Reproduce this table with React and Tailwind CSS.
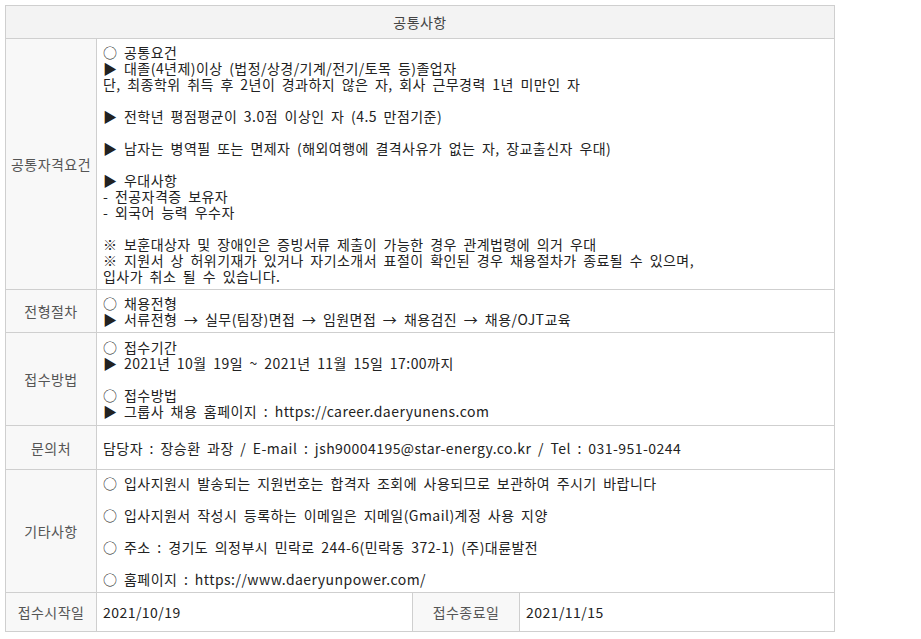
import React from 'react';

const qualification = `○ 공통요건
▶ 대졸(4년제)이상 (법정/상경/기계/전기/토목 등)졸업자
단, 최종학위 취득 후 2년이 경과하지 않은 자, 회사 근무경력 1년 미만인 자

▶ 전학년 평점평균이 3.0점 이상인 자 (4.5 만점기준)

▶ 남자는 병역필 또는 면제자 (해외여행에 결격사유가 없는 자, 장교출신자 우대)

▶ 우대사항
- 전공자격증 보유자
- 외국어 능력 우수자

※ 보훈대상자 및 장애인은 증빙서류 제출이 가능한 경우 관계법령에 의거 우대
※ 지원서 상 허위기재가 있거나 자기소개서 표절이 확인된 경우 채용절차가 종료될 수 있으며,
입사가 취소 될 수 있습니다.`;

const process = `○ 채용전형
▶ 서류전형 → 실무(팀장)면접 → 임원면접 → 채용검진 → 채용/OJT교육`;

const apply = `○ 접수기간
▶ 2021년 10월 19일 ~ 2021년 11월 15일 17:00까지

○ 접수방법
▶ 그룹사 채용 홈페이지 : https://career.daeryunens.com`;

const contact = `담당자 : 장승환 과장 / E-mail : jsh90004195@star-energy.co.kr / Tel : 031-951-0244`;

const etc = `○ 입사지원시 발송되는 지원번호는 합격자 조회에 사용되므로 보관하여 주시기 바랍니다

○ 입사지원서 작성시 등록하는 이메일은 지메일(Gmail)계정 사용 지양

○ 주소 : 경기도 의정부시 민락로 244-6(민락동 372-1) (주)대륜발전

○ 홈페이지 : https://www.daeryunpower.com/`;

const rows = [
    { label: '공통자격요건', body: qualification, h: 'h-[251px]' },
    { label: '전형절차', body: process, h: 'h-[43px]' },
    { label: '접수방법', body: apply, h: 'h-[93px]' },
    { label: '문의처', body: contact, h: 'h-[44px]' },
    { label: '기타사항', body: etc, h: 'h-[123px]' },
];

function Label({ children }) {
    return (
        <th className="border border-[#cfcfcf] bg-[#f8f8f8] p-0 text-center align-middle font-normal text-[#555] [word-spacing:0px]">
            {children}
        </th>
    );
}

function Cell({ children, colSpan }) {
    return (
        <td colSpan={colSpan} className="border border-[#cfcfcf] bg-white py-[5px] px-[6px] align-middle text-[#222] whitespace-pre-line">
            {children}
        </td>
    );
}

export default function App() {
    return (
        <div className="min-h-[639px] bg-white pt-[5px] pl-[5px] font-['Noto_Sans_CJK_KR',sans-serif] text-[14px] leading-[16px] tracking-[0.45px] [word-spacing:3px]">
            <table className="w-[829px] table-fixed border-collapse">
                <colgroup>
                    <col className="w-[91px]" />
                    <col className="w-[316px]" />
                    <col className="w-[107px]" />
                    <col className="w-[315px]" />
                </colgroup>
                <thead>
                    <tr className="h-[33px]">
                        <th colSpan={4} className="border border-[#cfcfcf] bg-[#f3f3f3] p-0 text-center font-normal text-[#444]">
                            공통사항
                        </th>
                    </tr>
                </thead>
                <tbody>
                    {rows.map((row) => (
                        <tr key={row.label} className={row.h}>
                            <Label>{row.label}</Label>
                            <Cell colSpan={3}>{row.body}</Cell>
                        </tr>
                    ))}
                    <tr className="h-[39px]">
                        <Label>접수시작일</Label>
                        <Cell>2021/10/19</Cell>
                        <Label>접수종료일</Label>
                        <Cell>2021/11/15</Cell>
                    </tr>
                </tbody>
            </table>
        </div>
    );
}
